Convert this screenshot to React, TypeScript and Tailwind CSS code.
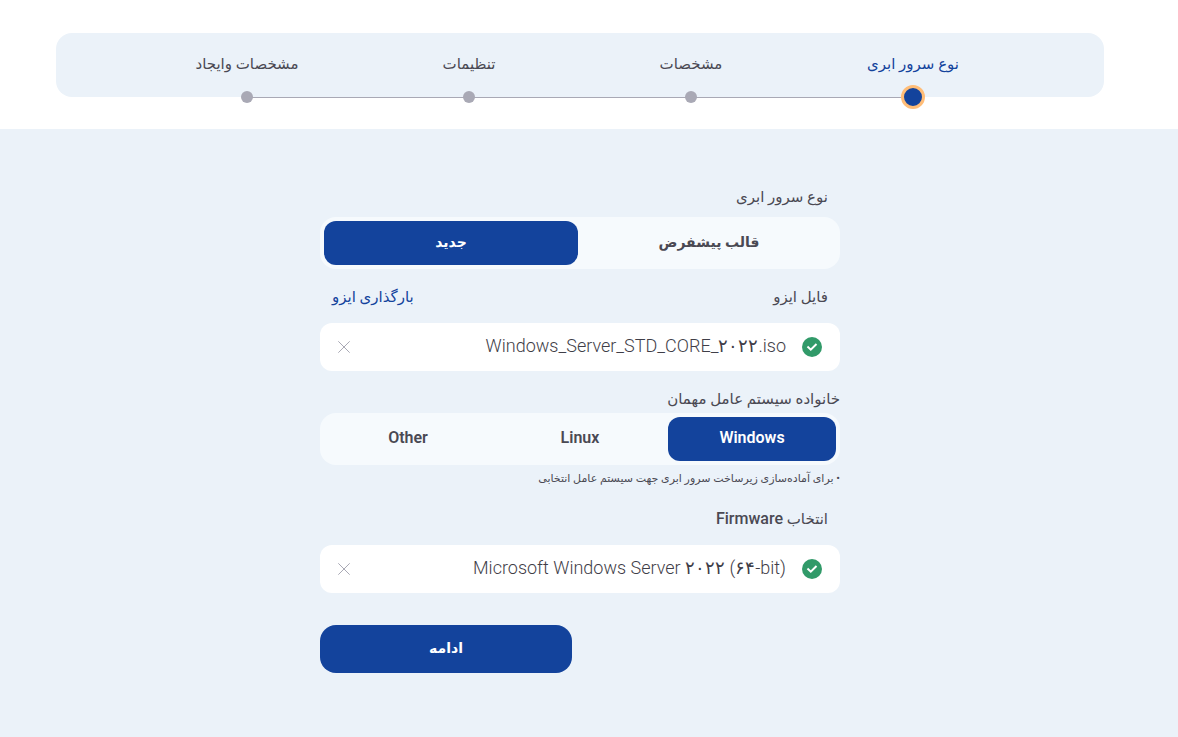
import { useState } from "react";

const STEPS = ["نوع سرور ابری", "مشخصات", "تنظیمات", "مشخصات وایجاد"];

const SERVER_TYPES = [
  { value: "template", label: "قالب پیشفرض" },
  { value: "new", label: "جدید" },
];

const OS_FAMILIES = [
  { value: "windows", label: "Windows" },
  { value: "linux", label: "Linux" },
  { value: "other", label: "Other" },
];

type Option = { value: string; label: string };

function Stepper({ current }: { current: number }) {
  return (
    <ol className="flex h-16 rounded-2xl bg-[#ebf2f9] px-20">
      {STEPS.map((step, i) => (
        <li
          key={step}
          aria-current={i === current ? "step" : undefined}
          className={`relative flex flex-1 justify-center pt-[19px] text-[15px] leading-6 ${
            i === current ? "text-[#13439c]" : "text-[#4a4953]"
          }`}
        >
          {step}
          {i < STEPS.length - 1 && (
            <span className="absolute top-full right-1/2 h-px w-full bg-[#a9a9b5]" />
          )}
          {i === current ? (
            <span className="absolute top-full left-1/2 size-6 -translate-x-1/2 -translate-y-1/2 rounded-full border-3 border-[#ffbd78] bg-[#13439c]" />
          ) : (
            <span className="absolute top-full left-1/2 size-3 -translate-x-1/2 -translate-y-1/2 rounded-full bg-[#a9a9b5]" />
          )}
        </li>
      ))}
    </ol>
  );
}

function Segmented({
  labelledBy,
  options,
  value,
  onChange,
  textClass,
}: {
  labelledBy: string;
  options: Option[];
  value: string;
  onChange: (value: string) => void;
  textClass: string;
}) {
  return (
    <div
      role="group"
      aria-labelledby={labelledBy}
      className={`flex gap-1 rounded-2xl bg-[#f6fafd] p-1 ${textClass}`}
    >
      {options.map((opt) => (
        <button
          key={opt.value}
          type="button"
          aria-pressed={opt.value === value}
          onClick={() => onChange(opt.value)}
          className={`h-11 flex-1 rounded-xl pb-0.5 ${
            opt.value === value ? "bg-[#13439c] text-white" : "text-[#4a4953]"
          }`}
        >
          {opt.label}
        </button>
      ))}
    </div>
  );
}

function SelectedField({
  id,
  value,
  onChange,
}: {
  id: string;
  value: string;
  onChange: (value: string) => void;
}) {
  return (
    <div className="flex h-12 items-center gap-4 rounded-xl bg-white px-[18px]">
      <svg viewBox="0 0 20 20" className="size-5 shrink-0" aria-hidden="true">
        <circle cx="10" cy="10" r="10" fill="#319a69" />
        <path
          d="M6.2 10.2l2.6 2.5 5-5"
          fill="none"
          stroke="#fff"
          strokeWidth="2"
          strokeLinecap="square"
        />
      </svg>
      <input
        id={id}
        dir="ltr"
        value={value}
        onChange={(e) => onChange(e.target.value)}
        className="min-w-0 flex-1 bg-transparent pb-0.5 text-right text-lg font-light text-[#3f3e48] outline-none"
      />
      <button type="button" aria-label="حذف" onClick={() => onChange("")} className="shrink-0">
        <svg viewBox="0 0 12 12" className="size-3" aria-hidden="true">
          <path d="M0.3 0.3l11.4 11.4M11.7 0.3L0.3 11.7" stroke="#a9a9b5" strokeWidth="1" />
        </svg>
      </button>
    </div>
  );
}

export default function App() {
  const [serverType, setServerType] = useState("new");
  const [osFamily, setOsFamily] = useState("windows");
  const [isoFile, setIsoFile] = useState("Windows_Server_STD_CORE_۲۰۲۲.iso");
  const [firmware, setFirmware] = useState("Microsoft Windows Server ۲۰۲۲ (۶۴-bit)");

  return (
    <div
      dir="rtl"
      className="flex min-h-screen flex-col bg-[#ebf2f9] font-[Roboto,'DejaVu_Sans',sans-serif] text-[#4a4953]"
    >
      <header className="bg-white pt-[33px] pr-[74px] pb-8 pl-14">
        <Stepper current={0} />
      </header>

      <main className="flex-1 pt-14 pr-[18px] pb-16">
        <form className="mx-auto flex max-w-[520px] flex-col" onSubmit={(e) => e.preventDefault()}>
          <span id="server-type" className="mb-2 px-3 text-[15px] leading-6">
            نوع سرور ابری
          </span>
          <Segmented
            labelledBy="server-type"
            options={SERVER_TYPES}
            value={serverType}
            onChange={setServerType}
            textClass="text-sm font-bold"
          />

          <div className="mt-4 mb-3.5 flex items-center justify-between px-3 text-[15px] leading-6">
            <label htmlFor="iso">فایل ایزو</label>
            <a href="#upload" className="text-[#13439c]">
              بارگذاری ایزو
            </a>
          </div>
          <SelectedField id="iso" value={isoFile} onChange={setIsoFile} />

          <span id="os-family" className="mt-4 mb-0.5 text-[15px] leading-6">
            خانواده سیستم عامل مهمان
          </span>
          <Segmented
            labelledBy="os-family"
            options={OS_FAMILIES}
            value={osFamily}
            onChange={setOsFamily}
            textClass="text-base font-semibold"
          />
          <p className="mt-1 text-[11px] leading-5">
            • برای آماده‌سازی زیرساخت سرور ابری جهت سیستم عامل انتخابی
          </p>

          <label htmlFor="firmware" className="mt-[18px] mb-3.5 px-3 text-[15px] leading-6">
            انتخاب <span className="text-base font-medium">Firmware</span>
          </label>
          <SelectedField id="firmware" value={firmware} onChange={setFirmware} />

          <button
            type="submit"
            className="mt-8 h-12 w-[252px] self-end rounded-2xl bg-[#13439c] pb-0.5 text-sm font-bold text-white"
          >
            ادامه
          </button>
        </form>
      </main>
    </div>
  );
}
